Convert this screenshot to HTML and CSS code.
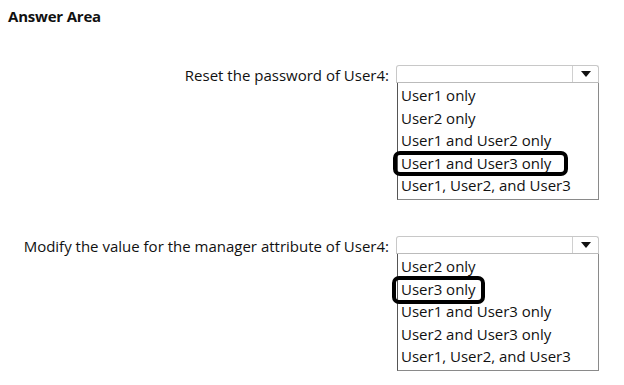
FILE: index.html
```html
<!DOCTYPE html>
<html>
<head>
<meta charset="utf-8">
<link rel="stylesheet" href="styles.css">
</head>
<body>
<div class="page">
  <h1 class="title">Answer Area</h1>
  <div class="question q1">
    <div class="label">Reset the password of User4:</div>
    <div class="dropdown">
      <div class="select">
        <span class="value"></span>
        <span class="btn"><span class="arrow"></span></span>
      </div>
      <ul class="list">
        <li>User1 only</li>
        <li>User2 only</li>
        <li>User1 and User2 only</li>
        <li class="picked wide">User1 and User3 only</li>
        <li>User1, User2, and User3</li>
      </ul>
    </div>
  </div>
  <div class="question q2">
    <div class="label">Modify the value for the manager attribute of User4:</div>
    <div class="dropdown">
      <div class="select">
        <span class="value"></span>
        <span class="btn"><span class="arrow"></span></span>
      </div>
      <ul class="list">
        <li>User2 only</li>
        <li class="picked narrow">User3 only</li>
        <li>User1 and User3 only</li>
        <li>User2 and User3 only</li>
        <li>User1, User2, and User3</li>
      </ul>
    </div>
  </div>
</div>
</body>
</html>
```
FILE: styles.css
```css
* , *::before, *::after { box-sizing: border-box; }
html, body { margin: 0; padding: 0; background: #fff; }
body {
  font-family: "Open Sans", "Noto Sans", sans-serif;
  color: #111;
  width: 624px;
  height: 385px;
  overflow: hidden;
}
.page { padding: 6px 0 0 8px; }
.title {
  margin: 0;
  font-size: 15px;
  font-weight: 700;
  line-height: 20px;
  letter-spacing: -0.2px;
}
.question {
  display: grid;
  grid-template-columns: 381px 203px;
  column-gap: 7px;
  align-items: start;
}
.q1 { margin-top: 39px; }
.q2 { margin-top: 36px; }
.label {
  text-align: right;
  font-size: 15px;
  line-height: 18px;
  padding-top: 1px;
}
.dropdown { width: 203px; }
.select {
  display: flex;
  height: 18px;
  border: 1px solid #c8c8c8;
  border-bottom-color: #bbb;
  border-radius: 3px 3px 0 0;
}
.value { flex: 1; }
.btn {
  width: 26px;
  border-left: 1px solid #d0d0d0;
  display: flex;
  align-items: center;
  justify-content: center;
}
.arrow {
  width: 0; height: 0;
  border-left: 5px solid transparent;
  border-right: 5px solid transparent;
  border-top: 6px solid #111;
}
.list {
  list-style: none;
  margin: 0 0 0 1px;
  padding: 1px 0 2px 3px;
  border: 1px solid #8a8a8a;
  border-top: none;
  border-left-color: #555;
}
.list li {
  position: relative;
  font-size: 15px;
  height: 22.6px;
  line-height: 22px;
}
.picked::after {
  content: "";
  position: absolute;
  border: 4px solid #000;
  border-radius: 7px;
}
.wide::after { left: -8px; top: -1px; width: 175px; height: 25px; }
.narrow::after { left: -9px; top: -2px; width: 93px; height: 28px; }
```
